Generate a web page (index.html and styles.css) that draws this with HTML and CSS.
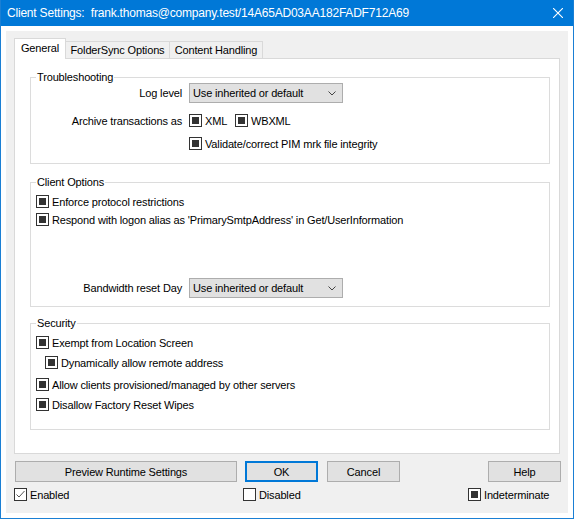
FILE: index.html
```html
<!DOCTYPE html>
<html lang="en">
<head>
    <meta charset="UTF-8">
    <title>Client Settings</title>
    <link rel="stylesheet" href="styles.css">
</head>
<body>

    <div class="window">
        <div class="titlebar">
            <span class="title">Client Settings:&nbsp; frank.thomas@company.test/14A65AD03AA182FADF712A69</span>
            <svg class="close" width="10" height="10" viewBox="0 0 10 10">
                <path d="M0 0 L10 10 M10 0 L0 10" stroke="#fff" stroke-width="1.1" fill="none"/>
            </svg>
        </div>

        <div class="frame">
            <div class="client">

                <div class="tabs">
                    <div class="tab selected tab-general">General</div>
                    <div class="tab tab-folder">FolderSync Options</div>
                    <div class="tab tab-content">Content Handling</div>
                </div>

                <div class="panel">

                    <fieldset class="group group-trouble">
                        <legend>Troubleshooting</legend>
                        <div class="row row-select">
                            <span class="row-label">Log level</span>
                            <div class="select">
                                <span>Use inherited or default</span>
                                <svg width="8" height="5" viewBox="0 0 8 5"><path d="M0.5 0.5 L4 4 L7.5 0.5" stroke="#444" fill="none"/></svg>
                            </div>
                        </div>
                        <div class="row row-check">
                            <span class="row-label">Archive transactions as</span>
                            <div class="options">
                                <label class="check opt-xml"><span class="cb ind"></span>XML</label>
                                <label class="check"><span class="cb ind"></span>WBXML</label>
                            </div>
                        </div>
                        <div class="row row-check row-validate">
                            <span class="row-label"></span>
                            <label class="check"><span class="cb ind"></span>Validate/correct PIM mrk file integrity</label>
                        </div>
                    </fieldset>

                    <fieldset class="group group-client">
                        <legend>Client Options</legend>
                        <label class="check item"><span class="cb ind"></span>Enforce protocol restrictions</label>
                        <label class="check item item-2"><span class="cb ind"></span>Respond with logon alias as 'PrimarySmtpAddress' in Get/UserInformation</label>
                        <div class="row row-select row-bandwidth">
                            <span class="row-label">Bandwidth reset Day</span>
                            <div class="select">
                                <span>Use inherited or default</span>
                                <svg width="8" height="5" viewBox="0 0 8 5"><path d="M0.5 0.5 L4 4 L7.5 0.5" stroke="#444" fill="none"/></svg>
                            </div>
                        </div>
                    </fieldset>

                    <fieldset class="group group-security">
                        <legend>Security</legend>
                        <label class="check item"><span class="cb ind"></span>Exempt from Location Screen</label>
                        <label class="check item sub"><span class="cb ind"></span>Dynamically allow remote address</label>
                        <label class="check item gap-9"><span class="cb ind"></span>Allow clients provisioned/managed by other servers</label>
                        <label class="check item"><span class="cb ind"></span>Disallow Factory Reset Wipes</label>
                    </fieldset>

                </div>

                <div class="buttons">
                    <button class="btn btn-preview">Preview Runtime Settings</button>
                    <button class="btn btn-ok">OK</button>
                    <button class="btn btn-cancel">Cancel</button>
                    <button class="btn btn-help">Help</button>
                </div>

                <div class="states">
                    <label class="check state-enabled">
                        <span class="cb">
                            <svg width="11" height="11" viewBox="0 0 11 11"><path d="M1.5 5.5 L4 8 L9.5 2" stroke="#555" stroke-width="1" fill="none"/></svg>
                        </span>Enabled
                    </label>
                    <label class="check state-disabled"><span class="cb"></span>Disabled</label>
                    <label class="check"><span class="cb ind"></span>Indeterminate</label>
                </div>

            </div>
        </div>
    </div>

</body>
</html>
```

FILE: styles.css
```css
body {
    margin: 0;
    background: #fff;
    font-family: "Liberation Sans", Arial, sans-serif;
    font-size: 11px;
    letter-spacing: -0.15px;
    color: #000;
}

.window {
    width: 574px;
    height: 519px;
    box-sizing: border-box;
    border: 1px solid #1a7fd4;
    border-top: none;
    display: flex;
    flex-direction: column;
    background: #fff;
}

.titlebar {
    height: 26px;
    flex: none;
    background: #0078d7;
    color: #fff;
    display: flex;
    align-items: center;
    justify-content: space-between;
    padding-left: 6px;
}

.title {
    font-size: 12px;
    letter-spacing: -0.2px;
}

.close {
    margin-right: 10px;
}

.frame {
    padding: 5px;
}

.client {
    background: #f0f0f0;
    height: 482px;
    box-sizing: border-box;
    padding: 7px 8px 0 8px;
}

/* tabs */
.tabs {
    display: flex;
    align-items: flex-end;
    height: 20px;
}

.tab {
    height: 17px;
    box-sizing: border-box;
    border: 1px solid #d9d9d9;
    border-bottom: none;
    background: #f0f0f0;
    display: flex;
    align-items: center;
    justify-content: center;
    margin-left: -1px;
    white-space: nowrap;
}

.tab.selected {
    height: 21px;
    margin-bottom: -1px;
    margin-left: 0;
    background: #fff;
    position: relative;
    z-index: 1;
    padding-bottom: 3px;
}

.tab-general { width: 52px; }
.tab-folder { width: 105px; }
.tab-content { width: 94px; }

.panel {
    height: 396px;
    box-sizing: border-box;
    border: 1px solid #d9d9d9;
    background: #fff;
    padding: 0 9px 0 15px;
    overflow: hidden;
}

/* group boxes */
.group {
    margin: 0;
    border: 1px solid #dcdcdc;
    padding: 0 0 0 5px;
    min-width: 0;
}

.group legend {
    padding: 0 1px;
    line-height: 12px;
}

.group-trouble {
    margin-top: 12px;
    padding-bottom: 13px;
}

.group-client {
    margin-top: 12px;
    padding-top: 7px;
    padding-bottom: 8px;
}

.group-security {
    margin-top: 10px;
    padding-top: 7px;
    padding-bottom: 18px;
}

.row {
    display: grid;
    grid-template-columns: 146px auto;
    column-gap: 7px;
    align-items: center;
}

.row-label {
    text-align: right;
}

.row-select {
    height: 20px;
}

.row-check {
    height: 13px;
    margin-top: 11px;
}

.row-validate {
    margin-top: 10px;
}

.row-bandwidth {
    margin-top: 52px;
}

.select {
    width: 154px;
    height: 20px;
    box-sizing: border-box;
    background: #e1e1e1;
    border: 1px solid #adadad;
    display: flex;
    align-items: center;
    justify-content: space-between;
    padding: 0 6px 0 3px;
}

.options {
    display: flex;
}

.opt-xml {
    width: 46px;
}

/* checkboxes */
.check {
    display: flex;
    align-items: center;
    height: 13px;
    gap: 3px;
    white-space: nowrap;
}

.cb {
    width: 13px;
    height: 13px;
    box-sizing: border-box;
    border: 1px solid #333;
    background: #fff;
    display: flex;
    align-items: center;
    justify-content: center;
    flex: none;
}

.cb.ind::after {
    content: "";
    width: 7px;
    height: 7px;
    background: #333;
}

.item {
    margin-top: 5px;
}

.group .item:first-of-type {
    margin-top: 0;
}

.group-security .item {
    margin-top: 7px;
}

.group-security .item.gap-9 {
    margin-top: 9px;
}

.sub {
    margin-left: 9px;
}

/* bottom */
.buttons {
    display: flex;
    margin-top: 7px;
    height: 21px;
}

.btn {
    font-family: inherit;
    font-size: 11px;
    letter-spacing: -0.15px;
    color: #000;
    height: 21px;
    box-sizing: border-box;
    background: #e1e1e1;
    border: 1px solid #adadad;
    padding: 0;
    width: 73px;
}

.btn-preview {
    width: 222px;
    margin-left: 1px;
}

.btn-ok {
    margin-left: 8px;
    border: 2px solid #0078d7;
}

.btn-cancel {
    margin-left: 9px;
}

.btn-help {
    margin-left: auto;
    margin-right: -1px;
}

.states {
    display: flex;
    margin-top: 6px;
}

.state-enabled {
    width: 229px;
}

.state-disabled {
    width: 225px;
}
```
